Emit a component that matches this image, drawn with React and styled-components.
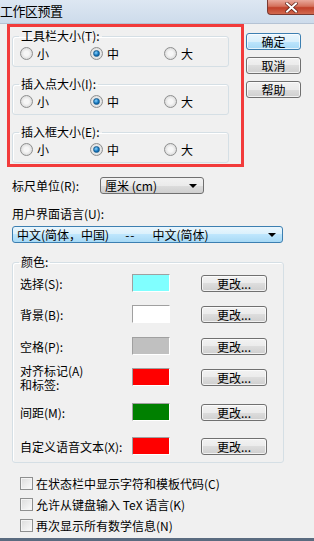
import styled, { createGlobalStyle } from "styled-components";

const GlobalStyle = createGlobalStyle`
	html, body {
		margin: 0;
		padding: 0;
		background: #f0f0f0;
	}
	body {
		font-family: "Noto Sans CJK SC", "Liberation Sans", sans-serif;
		font-size: 12px;
		color: #000;
	}
`;

const Window = styled.div`
	width: 314px;
	height: 541px;
	display: flex;
	flex-direction: column;
	overflow: hidden;
	background: #f0f0f0;
`;

const TitleBar = styled.div`
	height: 23px;
	flex: none;
	display: flex;
	justify-content: space-between;
	align-items: flex-start;
	background: linear-gradient(#dde7f2, #cddbeb);
	border-bottom: 1px solid #b5c3d4;
`;

const Title = styled.div`
	font-size: 13px;
	line-height: 22px;
	letter-spacing: -0.5px;
`;

const CloseButton = styled.div`
	width: 47px;
	height: 15px;
	display: flex;
	align-items: center;
	justify-content: center;
	border: 1px solid #7a3a32;
	border-top: none;
	border-right: none;
	border-bottom-left-radius: 4px;
	background: linear-gradient(#e9a99c, #d4715c 45%, #c0402a 55%, #d2694f);
	box-sizing: border-box;
`;

const Client = styled.div`
	flex: 1;
	display: flex;
	flex-direction: column;
	padding: 0 0 0 7px;
	border-bottom: 3px solid #5a6b80;
	min-height: 0;
`;

const TopRow = styled.div`
	display: flex;
	gap: 2px;
	align-items: flex-start;
`;

const Highlight = styled.div`
	width: 237px;
	height: 143px;
	box-sizing: border-box;
	border: 3px solid #f23b3b;
	padding: 3px 12px 0 2px;
	display: flex;
	flex-direction: column;
	gap: 11px;
`;

const Group = styled.fieldset`
	margin: 0;
	padding: 0 0 0 7px;
	border: 1px solid #d5dfe5;
	border-radius: 3px;
	box-shadow: inset 1px 1px 0 #fff;
	min-width: 0;
	height: ${(p) => p.$height || 37}px;
	box-sizing: border-box;
`;

const Legend = styled.legend`
	padding: 0 2px;
	margin-left: -1px;
	font-size: 12px;
	line-height: 12px;
	height: 12px;
`;

const RadioRow = styled.div`
	display: flex;
	align-items: center;
	margin-top: 5px;
`;

const Option = styled.label`
	display: flex;
	align-items: center;
	gap: 4px;
	width: ${(p) => p.$width}px;
	height: 13px;
	line-height: 13px;
`;

const RadioDot = styled.span`
	width: 13px;
	height: 13px;
	box-sizing: border-box;
	border-radius: 50%;
	border: 1px solid #8e8f8f;
	background: radial-gradient(circle at 50% 50%, #f6f6f6 30%, #d8d8d8 80%);
	display: flex;
	align-items: center;
	justify-content: center;

	&::after {
		content: "";
		width: 5px;
		height: 5px;
		border-radius: 50%;
		display: ${(p) => (p.$checked ? "block" : "none")};
		background: radial-gradient(circle at 40% 35%, #8ad4ff, #0d6fb8 60%, #0b4f89);
		border: 1px solid #1d5f8f;
	}
`;

const ButtonColumn = styled.div`
	display: flex;
	flex-direction: column;
	gap: 7px;
	padding-top: 9px;
`;

const Button = styled.button`
	width: ${(p) => p.$width || 55}px;
	height: 17px;
	padding: 0;
	font-family: inherit;
	font-size: 12px;
	line-height: 13px;
	color: #000;
	border-radius: 3px;
	border: 1px solid ${(p) => (p.$default ? "#3c7fb1" : "#707070")};
	background: ${(p) =>
		p.$default
			? "linear-gradient(#eaf6fd, #d9f0fc 50%, #bee6fd 50%, #a7d9f5)"
			: "linear-gradient(#f2f2f2, #ebebeb 50%, #dddddd 50%, #cfcfcf)"};
	box-shadow: inset 0 0 0 1px rgba(255, 255, 255, 0.7);
`;

const FieldRow = styled.div`
	display: flex;
	align-items: center;
	margin: 10px 0 0 5px;
	height: 17px;
`;

const FieldLabel = styled.div`
	width: ${(p) => (p.$width ? `${p.$width}px` : "auto")};
	height: 13px;
	line-height: 13px;
	white-space: nowrap;
	margin-top: ${(p) => p.$top || 0}px;
	padding-left: ${(p) => p.$indent || 0}px;
`;

const Select = styled.div`
	width: ${(p) => p.$width}px;
	height: 17px;
	flex: none;
	box-sizing: border-box;
	display: flex;
	align-items: center;
	padding: 0 6px 0 4px;
	border-radius: 3px;
	border: 1px solid ${(p) => (p.$active ? "#3c7fb1" : "#707070")};
	background: ${(p) =>
		p.$active
			? "linear-gradient(#eaf6fd, #d9f0fc 50%, #bee6fd 50%, #a7d9f5)"
			: "linear-gradient(#f2f2f2, #ebebeb 50%, #dddddd 50%, #cfcfcf)"};
	margin-left: ${(p) => p.$left || 0}px;
	margin-top: ${(p) => p.$top || 0}px;
	line-height: 13px;
	white-space: pre;
`;

const Sep = styled.span`
	padding: 0 17px 0 16px;
	letter-spacing: 1px;
`;

const Arrow = styled.span`
	width: 0;
	height: 0;
	margin-left: auto;
	border-left: 4px solid transparent;
	border-right: 4px solid transparent;
	border-top: 4px solid #000;
	margin-top: 1px;
`;

const ColorGroup = styled(Group)`
	width: 272px;
	flex: none;
	margin: 13px 0 0 5px;
	padding: 0 0 0 7px;
	display: flex;
	flex-direction: column;
`;

const ColorRow = styled.div`
	display: flex;
	align-items: center;
	height: 18px;
	margin-top: ${(p) => p.$top}px;
`;

const ColorLabel = styled.div`
	width: 112px;
	line-height: ${(p) => (p.$lines ? 14 : 13)}px;
	margin-top: ${(p) => (p.$lines ? 1 : 0)}px;
`;

const Swatch = styled.div`
	width: 38px;
	height: 18px;
	box-sizing: border-box;
	border: 1px solid #fff;
	border-top-color: #a0a0a0;
	border-left-color: #a0a0a0;
	background: ${(p) => p.$color};
	margin-right: 31px;
`;

const CheckList = styled.div`
	display: flex;
	flex-direction: column;
	gap: 8px;
	margin: 14px 0 0 13px;
`;

const CheckItem = styled.label`
	display: flex;
	align-items: center;
	gap: 3px;
	height: 13px;
	line-height: 13px;
`;

const CheckBox = styled.span`
	width: 13px;
	height: 13px;
	box-sizing: border-box;
	border: 1px solid #8e8f8f;
	background: linear-gradient(135deg, #dcdcdc, #fbfbfb);
	box-shadow: inset 0 0 0 1px #f4f4f4;
`;

const sizeGroups = [
	{ label: "工具栏大小(T):" },
	{ label: "插入点大小(I):" },
	{ label: "插入框大小(E):" },
];

const colors = [
	{ label: "选择(S):", color: "#80ffff", top: 6 },
	{ label: "背景(B):", color: "#ffffff", top: 13 },
	{ label: "空格(P):", color: "#c0c0c0", top: 14 },
	{ label: ["对齐标记(A)", "和标签:"], color: "#ff0000", top: 13 },
	{ label: "间距(M):", color: "#008000", top: 17 },
	{ label: "自定义语音文本(X):", color: "#ff0000", top: 16 },
];

const checks = [
	"在状态栏中显示字符和模板代码(C)",
	"允许从键盘输入 TeX 语言(K)",
	"再次显示所有数学信息(N)",
];

const App = () => {
	return (
		<>
			<GlobalStyle />
			<Window>
				<TitleBar>
					<Title>工作区预置</Title>
					<CloseButton>
						<svg width="13" height="11" viewBox="0 0 13 11">
							<path
								d="M2 1.5 L11 9.5 M11 1.5 L2 9.5"
								stroke="#5a1e16"
								strokeWidth="3.4"
								strokeLinecap="square"
							/>
							<path
								d="M2 1.5 L11 9.5 M11 1.5 L2 9.5"
								stroke="#fff"
								strokeWidth="2"
								strokeLinecap="square"
							/>
						</svg>
					</CloseButton>
				</TitleBar>
				<Client>
					<TopRow>
						<Highlight>
							{sizeGroups.map((g) => (
								<Group key={g.label}>
									<Legend>{g.label}</Legend>
									<RadioRow>
										<Option $width={70}>
											<RadioDot />小
										</Option>
										<Option $width={74}>
											<RadioDot $checked />中
										</Option>
										<Option $width={50}>
											<RadioDot />大
										</Option>
									</RadioRow>
								</Group>
							))}
						</Highlight>
						<ButtonColumn>
							<Button $default>确定</Button>
							<Button>取消</Button>
							<Button>帮助</Button>
						</ButtonColumn>
					</TopRow>

					<FieldRow>
						<FieldLabel $width={88}>标尺单位(R):</FieldLabel>
						<Select $width={104}>
							厘米 (cm)
							<Arrow />
						</Select>
					</FieldRow>
					<FieldLabel $top={13} $indent={5}>
						用户界面语言(U):
					</FieldLabel>
					<Select $width={271} $left={5} $top={6} $active>
						中文(简体，中国)
						<Sep>--</Sep>
						中文(简体)
						<Arrow />
					</Select>

					<ColorGroup $height={207}>
						<Legend>颜色:</Legend>
						{colors.map((c, i) => (
							<ColorRow key={i} $top={c.top}>
								<ColorLabel $lines={Array.isArray(c.label)}>
									{Array.isArray(c.label)
										? c.label.map((l) => <div key={l}>{l}</div>)
										: c.label}
								</ColorLabel>
								<Swatch $color={c.color} />
								<Button $width={66}>更改...</Button>
							</ColorRow>
						))}
					</ColorGroup>

					<CheckList>
						{checks.map((t) => (
							<CheckItem key={t}>
								<CheckBox />
								{t}
							</CheckItem>
						))}
					</CheckList>
				</Client>
			</Window>
		</>
	);
};

export default App;
